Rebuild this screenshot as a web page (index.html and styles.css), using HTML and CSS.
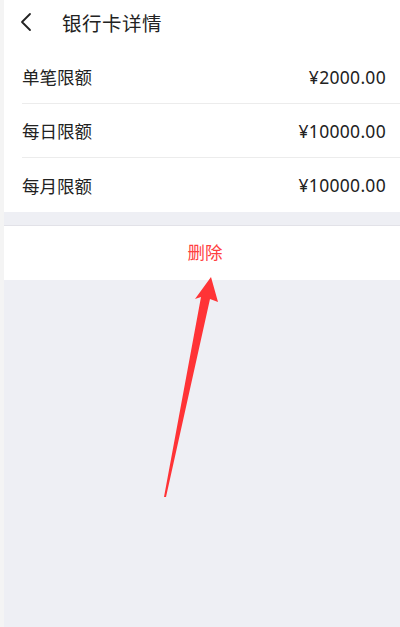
FILE: index.html
```html
<!DOCTYPE html>
<html lang="zh">
<head>
<meta charset="utf-8">
<title>银行卡详情</title>
<link rel="stylesheet" href="styles.css">
</head>
<body>
<div class="app">
  <header class="nav">
    <svg class="back" width="12" height="20" viewBox="0 0 12 20"><path d="M10 2 L2 10 L10 18" fill="none" stroke="#222" stroke-width="1.8" stroke-linecap="round" stroke-linejoin="round"/></svg>
    <h1 class="title">银行卡详情</h1>
  </header>
  <section class="list">
    <div class="row"><span class="label">单笔限额</span><span class="value">¥2000.00</span></div>
    <div class="row"><span class="label">每日限额</span><span class="value">¥10000.00</span></div>
    <div class="row last"><span class="label">每月限额</span><span class="value">¥10000.00</span></div>
  </section>
  <div class="gap"></div>
  <button class="delete">删除</button>
</div>
<svg class="arrow" width="400" height="627" viewBox="0 0 400 627">
  <polygon points="211,277 218,302 210,299 166,497 164,497 201,297 195,299" fill="#ff3336"/>
</svg>
</body>
</html>
```
FILE: styles.css
```css
html, body {
  margin: 0;
  padding: 0;
}
body {
  background: #f4f4f4;
  font-family: "Noto Sans", "Noto Sans CJK SC", sans-serif;
  color: #222;
  width: 400px;
  height: 627px;
  overflow: hidden;
  position: relative;
}
.app {
  margin-left: 4px;
  background: #eeeff4;
  min-height: 627px;
}
.nav {
  height: 44px;
  background: #fff;
  display: flex;
  align-items: center;
}
.back {
  margin-left: 16px;
  flex: none;
}
.title {
  margin: 0 0 0 30px;
  font-size: 19.5px;
  font-weight: normal;
  color: #222;
  letter-spacing: 0.5px;
}
.list {
  background: #fff;
  padding-top: 6px;
}
.row {
  margin-left: 18px;
  padding-right: 14px;
  height: 53px;
  border-bottom: 1px solid #ececec;
  display: flex;
  align-items: center;
  justify-content: space-between;
  font-size: 17px;
}
.row.last {
  border-bottom: none;
  height: 54px;
}
.label {
  font-size: 17.5px;
}
.value {
  font-size: 17.5px;
  letter-spacing: 0.3px;
}
.gap {
  height: 13px;
  border-bottom: 1px solid #e2e2e8;
}
.delete {
  display: block;
  width: 100%;
  height: 54px;
  border: none;
  margin: 0;
  background: #fff;
  color: #ff4040;
  font-family: "Noto Sans CJK SC", sans-serif;
  font-size: 17.5px;
  padding: 0 0 3px 6px;
}
.arrow {
  position: absolute;
  left: 0;
  top: 0;
  pointer-events: none;
}
```
